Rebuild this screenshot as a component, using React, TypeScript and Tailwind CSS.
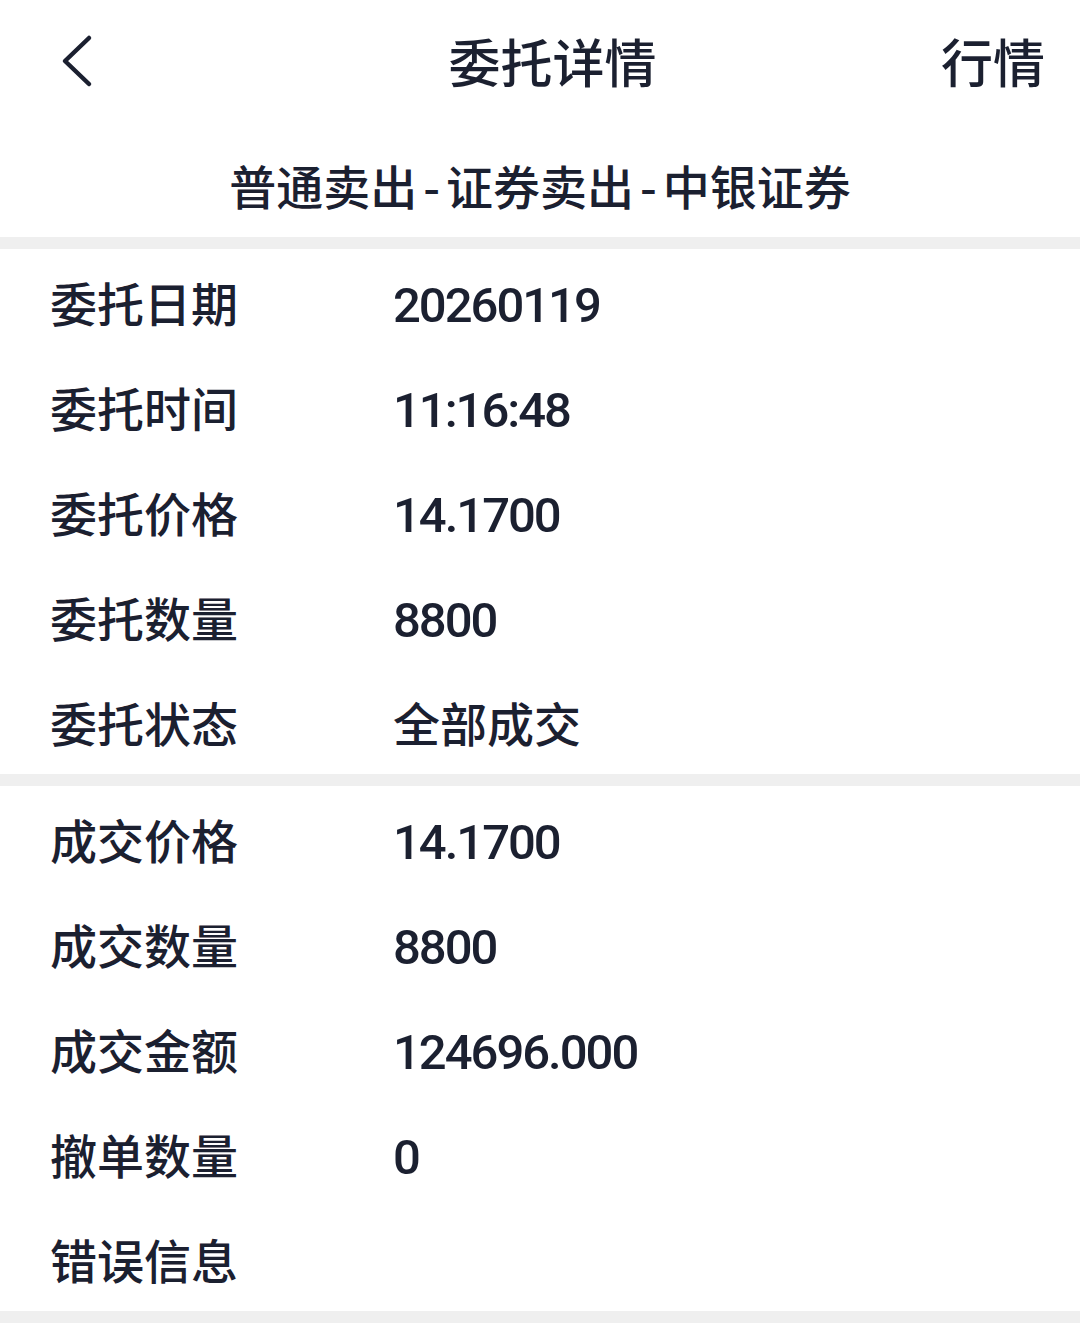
import React from "react";

const cjk = "font-['Noto_Sans_CJK_SC','Noto_Sans',sans-serif]";
const num = "font-['Roboto','Noto_Sans_CJK_SC',sans-serif]";

type Row = { label: string; value: string };

const section1: Row[] = [
  { label: "委托日期", value: "20260119" },
  { label: "委托时间", value: "11:16:48" },
  { label: "委托价格", value: "14.1700" },
  { label: "委托数量", value: "8800" },
  { label: "委托状态", value: "全部成交" },
];

const section2: Row[] = [
  { label: "成交价格", value: "14.1700" },
  { label: "成交数量", value: "8800" },
  { label: "成交金额", value: "124696.000" },
  { label: "撤单数量", value: "0" },
  { label: "错误信息", value: "" },
];

function isNumeric(v: string) {
  return /^[0-9.:]+$/.test(v);
}

function DetailRow({ label, value }: Row) {
  return (
    <div className="flex h-[105px] items-center">
      <div
        className={`w-[393px] shrink-0 pl-[50px] text-[47px] leading-none font-medium text-[#1b2030] ${cjk}`}
      >
        {label}
      </div>
      {value !== "" &&
        (isNumeric(value) ? (
          <div
            className={`pt-[8px] text-[49px] leading-none font-medium tracking-[-2px] text-[#1b2030] ${num}`}
          >
            {value}
          </div>
        ) : (
          <div
            className={`text-[47px] leading-none font-medium text-[#1b2030] ${cjk}`}
          >
            {value}
          </div>
        ))}
    </div>
  );
}

export default function App() {
  return (
    <div className="flex h-[1339px] w-[1080px] flex-col overflow-hidden bg-white">
      <div className="flex h-[122px] shrink-0 items-center">
        <div className="flex w-[164px] shrink-0 items-center">
          <svg
            width="100"
            height="100"
            viewBox="0 0 100 100"
            className="ml-[27px] mt-[24px]"
          >
            <polyline
              points="62,15 38,38 62,61"
              fill="none"
              stroke="#1b2030"
              strokeWidth="4.5"
              strokeLinecap="round"
              strokeLinejoin="round"
            />
          </svg>
        </div>
        <div
          className={`flex-1 text-center text-[52px] leading-none font-medium text-[#1b2030] ${cjk}`}
        >
          委托详情
        </div>
        <div
          className={`pr-[35px] text-[52px] leading-none font-medium text-[#1b2030] ${cjk}`}
        >
          行情
        </div>
      </div>
      <div
        className={`flex h-[115px] shrink-0 items-center justify-center pt-[9px] text-[47px] leading-none font-medium text-[#1b2030] ${cjk}`}
      >
        普通卖出<span className="mx-[6px]">-</span>证券卖出
        <span className="mx-[6px]">-</span>中银证券
      </div>
      <div className="h-[12px] shrink-0 bg-[#efefef]" />
      <div className="flex flex-col">
        {section1.map((r) => (
          <DetailRow key={r.label} {...r} />
        ))}
      </div>
      <div className="h-[12px] shrink-0 bg-[#efefef]" />
      <div className="flex flex-col">
        {section2.map((r) => (
          <DetailRow key={r.label} {...r} />
        ))}
      </div>
      <div className="h-[12px] shrink-0 bg-[#efefef]" />
    </div>
  );
}
